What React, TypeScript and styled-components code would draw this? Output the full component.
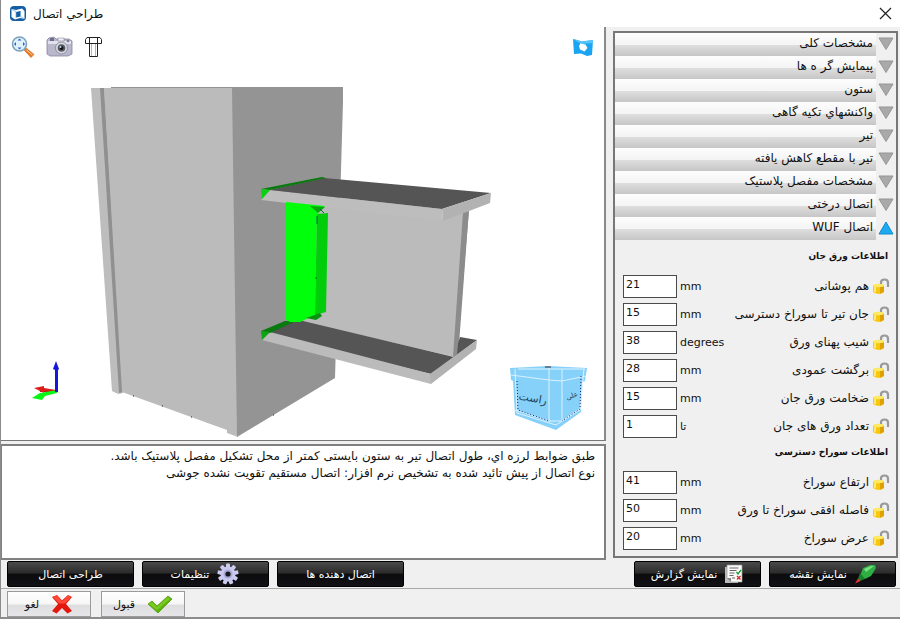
import React, { useState } from "react";
import styled, { createGlobalStyle, css } from "styled-components";

const GlobalStyle = createGlobalStyle`
  * { box-sizing: border-box; }
  body { margin: 0; background: #f0f0f0; }
  body, button, input { font-family: "DejaVu Sans", sans-serif; font-size: 11px; color: #111; }
  button { cursor: pointer; }
  svg { display: block; flex: none; }
`;

const Dialog = styled.main`
  display: flex;
  flex-direction: column;
  min-height: 100vh;
  background: #f0f0f0;
  border-left: 1px solid #8c8c8c;
  border-bottom: 2px solid #8c8c8c;
`;

const TitleBar = styled.header`
  display: flex;
  align-items: center;
  gap: 6px;
  height: 27px;
  padding: 0 8px;
  background: #fff;
`;

const Title = styled.h1`
  flex: 1;
  margin: 0;
  font-size: 12px;
  font-weight: 400;
`;

const IconButton = styled.button`
  display: grid;
  place-items: center;
  padding: 0;
  border: 0;
  background: none;
`;

const Workspace = styled.div`
  flex: 1;
  display: grid;
  grid-template-columns: minmax(0, 1fr) 285px;
  gap: 7px;
  padding-right: 2px;
`;

const Left = styled.div`
  display: flex;
  flex-direction: column;
  gap: 3px;
`;

const Viewport = styled.section`
  flex: 1;
  display: flex;
  flex-direction: column;
  background: #fff;
  border-right: 2px solid #8a8a8a;
  border-bottom: 1px solid #777;
`;

const ViewTools = styled.div`
  display: flex;
  align-items: center;
  gap: 11px;
  height: 40px;
  padding: 0 10px;
`;

const PushRight = styled.div`
  margin-left: auto;
`;

const Scene = styled.svg`
  width: 100%;
  flex: 1 1 0;
  min-height: 300px;
`;

const Messages = styled.section`
  height: 116px;
  padding: 2px 9px;
  background: #fff;
  border: 2px solid #808080;
  border-left-width: 1px;
  font-size: 12px;
  line-height: 17px;
  p { margin: 0; }
`;

const Panel = styled.aside`
  margin-top: 4px;
  margin-bottom: 2px;
  border: 2px solid #777;
  background: #f0f0f0;
`;

const SectionToggle = styled.button`
  display: grid;
  grid-template-columns: 20px 1fr;
  align-items: center;
  justify-items: center;
  width: 100%;
  height: 23px;
  padding: 0;
  border: 0;
  background: none;
  font-size: 12px;
`;

const SectionBar = styled.span`
  justify-self: stretch;
  height: 23px;
  padding: 0 3px;
  line-height: 20px;
  text-align: right;
  background: linear-gradient(#fdfdfd 0, #f4f4f4 50%, #dedede 53%, #c6c6c6 100%);
`;

const GroupTitle = styled.h2<{ $tall?: boolean }>`
  height: ${(p) => (p.$tall ? 32 : 28)}px;
  margin: 0;
  padding: 0 8px;
  line-height: ${(p) => (p.$tall ? 32 : 24)}px;
  font-size: 9px;
  font-weight: 700;
`;

const FieldRow = styled.div`
  display: flex;
  align-items: center;
  gap: 3px;
  height: 28px;
  padding: 0 6px 0 8px;
`;

const FieldLabel = styled.label`
  font-size: 12px;
`;

const NumberBox = styled.input`
  width: 54px;
  height: 23px;
  padding: 0 2px 4px;
  border: 1px solid #4a4a4a;
  border-radius: 0;
  background: #fff;
`;

const Unit = styled.span`
  flex: 1;
`;

const ActionBar = styled.div`
  display: flex;
  align-items: center;
  gap: 8px;
  height: 29px;
  padding: 0 4px 0 6px;
  border-bottom: 1px solid #a8a8a8;
`;

const Spacer = styled.div`
  flex: 1;
`;

const buttonBase = css`
  display: flex;
  align-items: center;
  justify-content: center;
  height: 26px;
  padding: 0;
`;

const DarkButton = styled.button`
  ${buttonBase}
  gap: 7px;
  width: 127px;
  color: #fff;
  border: 1px solid #000;
  border-radius: 2px;
  background: linear-gradient(#4a4a4a 0, #2c2c2c 45%, #0c0c0e 52%, #111116 100%);
`;

const Footer = styled.footer`
  display: flex;
  gap: 10px;
  padding: 2px 6px 0;
`;

const LightButton = styled.button`
  ${buttonBase}
  gap: 12px;
  width: 84px;
  border: 1px solid #9a9a9a;
  background: linear-gradient(#fff 0, #f6f6f6 50%, #dedee0 55%, #e6e6e8 100%);
`;

const AppLogo = () => (
  <svg width="18" height="18" viewBox="0 0 18 18">
    <rect x="1" y="1" width="16" height="15" rx="4" fill="#145ea3" />
    <path d="M2.500 4 7 5l6-1.500L15.500 6v8L11 13l-5 1.500L2.500 12z" fill="#fff" />
    <path d="M7 7l4.500-1v5.500L7 12.500z" fill="#145ea3" />
    <path d="M3 4.500l4 2v6M15 13.500l-3.500-2V6" fill="none" stroke="#6fa9d8" strokeWidth=".7" />
  </svg>
);

const CloseIcon = () => (
  <svg width="13" height="13" viewBox="0 0 13 13" stroke="#222" strokeWidth="1.200">
    <path d="M1 1l11 11M12 1L1 12" />
  </svg>
);

const ZoomIcon = () => (
  <svg width="24" height="24" viewBox="0 0 24 24">
    <path d="M13 15l2-2 8 6.500-3 3z" fill="#ee7a24" stroke="#c55a20" strokeWidth=".6" />
    <path d="M15.500 15l6 5" stroke="#ffd08a" />
    <circle cx="8.500" cy="9" r="7" fill="#dff1fb" stroke="#7da3bd" strokeWidth="1.600" />
    <path d="M8.500 3.500l2 2h-4zM8.500 14.500l2-2h-4zM3 9l2-2v4zM14 9l-2-2v4z" fill="#2a5fd0" />
  </svg>
);

const CameraIcon = () => (
  <svg width="27" height="22" viewBox="0 0 27 22">
    <path d="M3 2l5-1 2 2h13l3 2v13l-4 2H4l-3-2V4z" fill="#b9b7cc" stroke="#8583a0" strokeWidth=".8" />
    <path d="M2 5h23v3H2z" fill="#e2e1ee" />
    <path d="M4 2h4v3H4z" fill="#6f6d8e" />
    <rect x="12" y="2" width="6" height="3" fill="#eef" stroke="#777" strokeWidth=".5" />
    <circle cx="22" cy="5" r="1.300" fill="#7b7b95" />
    <circle cx="15.500" cy="12" r="6" fill="#d9d9e2" stroke="#8f8fa2" />
    <circle cx="15.500" cy="12" r="3.800" fill="#555866" />
    <circle cx="15.500" cy="12" r="1.900" fill="#111" />
    <circle cx="14.500" cy="11" r="1" fill="#cde" />
  </svg>
);

const BoltIcon = () => (
  <svg width="19" height="21" viewBox="0 0 19 21" fill="#fff" stroke="#222">
    <path d="M5.500 6.500h8v13h-8z" />
    <path d="M7.500 7v12M11.500 7v12" stroke="#b5b5b5" />
    <path d="M3 .5h13l1.500 2v4h-16v-4z" />
    <path d="M5.500 1v5M13.500 1v5" />
  </svg>
);

const PerspectiveIcon = () => (
  <svg width="22" height="19" viewBox="0 0 22 19">
    <path d="M1 1l4 1 5 1.500 11-1.500-1 15-5 1-6-2.500-7 .5z" fill="#1ba4f2" />
    <path d="M1 1l4 1 5 1.500L21 2v3L9 6z" fill="#55c4fb" />
    <path d="M8.500 5.500l5 1 2 3.500-3 3.500-4.500-2L7 8z" fill="#fff" />
  </svg>
);

const Arrow = ({ open }: { open: boolean }) => (
  <svg width="16" height="18" viewBox="0 0 16 18">
    {open ? (
      <path d="M8 2l7 12H1z" fill="#1cabf2" stroke="#138bcc" strokeLinejoin="round" />
    ) : (
      <path d="M1 2h14L8 13.500z" fill="#a9a9a9" stroke="#969696" strokeLinejoin="round" />
    )}
  </svg>
);

const LockIcon = () => (
  <svg width="18" height="17" viewBox="0 0 18 17">
    <path d="M9 7V4.500C9 .5 16 .5 16 4.500V9" fill="none" stroke="#999" strokeWidth="2.200" />
    <path d="M1 7.500q5-3 11 0V14q-5 4-11 0z" fill="#f8c811" />
    <path d="M8 6.500l4 1V14l-4 1.800z" fill="#dfa000" />
    <ellipse cx="6.500" cy="7.500" rx="5.500" ry="1.700" fill="#ffea65" />
    <path d="M3 9v5" stroke="#fff3a0" strokeWidth="1.500" />
  </svg>
);

const GearIcon = () => (
  <svg width="24" height="22" viewBox="-12 -11 24 22">
    {[0, 40, 80, 120, 160, 200, 240, 280, 320].map((a) => (
      <rect key={a} x="-2" y="-10.500" width="4" height="6" rx="1" fill="#cdcdf2" transform={`rotate(${a})`} />
    ))}
    <circle r="7.500" fill="#c9c9ef" />
    <circle r="4.500" fill="#a9a9d8" />
    <circle r="2.600" fill="#17171c" />
  </svg>
);

const PenIcon = () => (
  <svg width="22" height="20" viewBox="0 0 22 20">
    <path d="M9 4l7-3h5l1 3-5 8-6 3-5-3z" fill="#2fae43" />
    <path d="M10 5l7-3h3l-8 6z" fill="#7be085" />
    <path d="M6 9l5 6-5 2-2-2z" fill="#168127" />
    <path d="M4 14.500l2.500 2.500L1 19.500z" fill="#e33" />
  </svg>
);

const ReportIcon = () => (
  <svg width="20" height="20" viewBox="0 0 20 20">
    <path d="M1 3h13v16H1z" fill="#bbb" />
    <path d="M3 1h15v17H7l-4-4z" fill="#fafafa" stroke="#999" strokeWidth=".7" />
    <path d="M5.500 4h9M5.500 6.500h7M5.500 9h5M5.500 11.500h4M8 14h3" stroke="#666" />
    <path d="M12.500 8l1.500 2 3-4" fill="none" stroke="#1b9c2d" strokeWidth="1.300" />
    <path d="M13 12l3.500 3.500m0-3.500L13 15.500" stroke="#d22" strokeWidth="1.300" />
    <path d="M3 14h4v4z" fill="#888" />
  </svg>
);

const CrossIcon = () => (
  <svg width="22" height="20" viewBox="0 0 22 20">
    <path d="M1 3l5-2 5 5.500L17 1l4 2-6 7 6 7-4.500 2.500L11 14l-5.500 5.500L1 17l6-7z" fill="#e3170d" />
    <path d="M2 3l4-1.500 5 6 6-6 3 1.500-6 6.500H8z" fill="#ff4a38" />
  </svg>
);

const CheckIcon = () => (
  <svg width="26" height="19" viewBox="0 0 26 19">
    <path d="M1 9l4-3 5 5L21 1l4 3-14 14z" fill="#5fb20c" stroke="#4b9704" strokeWidth=".7" />
    <path d="M2 9l3-2 5 5L21 2l2 2-13 11z" fill="#79cb23" />
  </svg>
);

const CubeText = styled.text`
  font-family: "DejaVu Sans", sans-serif;
  fill: #1c4257;
`;

const ConnectionScene = () => (
  <Scene viewBox="1 67 603 373" role="img" aria-label="اتصال تیر به ستون">
    <g>
      <path d="M91 88h14l18 305-5 1-6-3z" fill="#bdbdbd" />
      <path d="M100 88h4l19 304-4 1z" fill="#909090" />
      <path d="M104 88h129l5 349-11-4v-3l-105-38z" fill="#bbb" />
      <path d="M232 88h111v13l-8 277-98 59z" fill="#949494" />
      <path d="M111 87.500h16M127 87.500h216" stroke="#777" strokeWidth=".8" />
      <path d="M133 396h1M162 406h1M191 417h1M273 415h1" stroke="#222" />
    </g>
    <g>
      <path d="M286 202l157 17 21-8-9 146-155-36z" fill="#bbb" />
      <path d="M464 211l5-2-11 149-4 1z" fill="#8c8c8c" />
      <path d="M261 333l24-12 18 0 151 36 6-20 17 3-46 34z" fill="#555" />
      <path d="M463 212l6-2-12 145-4 2z" fill="#8c8c8c" />
      <path d="M262 340l8-8 161 42v10z" fill="#bbb" />
      <path d="M430 374l47-34-1 9-45 35z" fill="#b2b2b2" />
      <path d="M261 200l9-10 172 19 1 12z" fill="#bdbdbd" />
      <path d="M270 190l54-12 167 15-49 16z" fill="#555" />
      <path d="M442 209l49-16-1 10-47 18z" fill="#b2b2b2" />
    </g>
    <g>
      <path d="M261 189l61-12 4 1-56 12z" fill="#087a10" />
      <path d="M261 189l9 1-8 9z" fill="#0bd014" />
      <path d="M261 331l24-10h11l-26 12z" fill="#087a10" />
      <path d="M261 331l9 1-8 8z" fill="#0ca514" />
      <path d="M286 202l39 4-8 8-2 101-15 7h-10l-5-3z" fill="#00ff0a" />
      <path d="M317 214l11-1-2 99-11 3z" fill="#02cd0a" />
      <path d="M310 206l15 1-7 6z" fill="#05a90d" />
      <path d="M306 318l14-5 2 3-6 4z" fill="#07930d" />
      <path d="M320 209l4 4M317 216v8M316 277v2" stroke="#064" />
    </g>
    <g>
      <path d="M57 392l-17-3v3z" fill="#b01818" />
      <path d="M34 388l10-2v2l12 2v2l-12-1v2z" fill="#dc1b1b" />
      <path d="M57 390v3l-12 3-3 4-10-2 8-5z" fill="#09f515" />
      <path d="M55 392v-22l-2-1 3-8 3 8-1 1v22z" fill="#1717dc" />
    </g>
    <g>
      <path d="M510 368l38-2 39 2-2 13-3 1-1 30-25 18-41-15-2-34-2-1z" fill="#86d1fa" />
      <path d="M511 375l38 5 13 1 24-5M515 369l2 44 39 12M549 368v54M562 369v51M518 369h67M584 369l-4 41-24 15M515 410l34 11h13l19-13" fill="none" stroke="#dbf2ff" />
      <path d="M517 381l1 29 31 11M581 376l-1 33-18 12" fill="none" stroke="#226" strokeDasharray="1 2" />
      <path d="M545 367h6" stroke="#333" />
      <CubeText x="533" y="402" fontSize="11" textAnchor="middle" transform="rotate(10 533 398)">راست</CubeText>
      <CubeText x="572" y="398" fontSize="7" textAnchor="middle" transform="rotate(-20 572 396)">علی</CubeText>
    </g>
  </Scene>
);

const sections = [
  "مشخصات کلی",
  "پیمایش گر ه ها",
  "ستون",
  "واکنشهاي تکیه گاهی",
  "تیر",
  "تیر با مقطع کاهش یافته",
  "مشخصات مفصل پلاستیک",
  "اتصال درختی",
  "اتصال WUF",
];

type FieldData = { id: string; label: string; value: string; unit: string };

const webPlate: FieldData[] = [
  { id: "overlap", label: "هم پوشانی", value: "21", unit: "mm" },
  { id: "webgap", label: "جان تیر تا سوراخ دسترسی", value: "15", unit: "mm" },
  { id: "slope", label: "شیب پهنای ورق", value: "38", unit: "degrees" },
  { id: "return", label: "برگشت عمودی", value: "28", unit: "mm" },
  { id: "thickness", label: "ضخامت ورق جان", value: "15", unit: "mm" },
  { id: "count", label: "تعداد ورق های جان", value: "1", unit: "تا" },
];

const accessHole: FieldData[] = [
  { id: "height", label: "ارتفاع سوراخ", value: "41", unit: "mm" },
  { id: "distance", label: "فاصله افقی سوراخ تا ورق", value: "50", unit: "mm" },
  { id: "width", label: "عرض سوراخ", value: "20", unit: "mm" },
];

const Field = ({ data }: { data: FieldData }) => {
  const [value, setValue] = useState(data.value);
  return (
    <FieldRow>
      <NumberBox id={data.id} value={value} onChange={(e) => setValue(e.target.value)} />
      <Unit>{data.unit}</Unit>
      <FieldLabel htmlFor={data.id} dir="rtl">{data.label}</FieldLabel>
      <IconButton aria-label="قفل">
        <LockIcon />
      </IconButton>
    </FieldRow>
  );
};

export default function App() {
  const [open, setOpen] = useState(8);
  return (
    <>
      <GlobalStyle />
      <Dialog lang="fa">
        <TitleBar>
          <AppLogo />
          <Title>طراحي اتصال</Title>
          <IconButton aria-label="بستن"><CloseIcon /></IconButton>
        </TitleBar>

        <Workspace>
          <Left>
            <Viewport>
              <ViewTools>
                <IconButton aria-label="بزرگنمایی"><ZoomIcon /></IconButton>
                <IconButton aria-label="عکس"><CameraIcon /></IconButton>
                <IconButton aria-label="پیچ"><BoltIcon /></IconButton>
                <PushRight>
                  <IconButton aria-label="نما"><PerspectiveIcon /></IconButton>
                </PushRight>
              </ViewTools>
              <ConnectionScene />
            </Viewport>
            <Messages dir="rtl">
              <p>طبق ضوابط لرزه اي، طول اتصال تیر به ستون بایستی کمتر از محل تشکیل مفصل پلاستیک باشد.</p>
              <p>نوع اتصال از پیش تائید شده به تشخیص نرم افزار: اتصال مستقیم تقویت نشده جوشی</p>
            </Messages>
          </Left>

          <Panel>
            {sections.map((name, i) => (
              <SectionToggle key={name} dir="rtl" aria-expanded={open === i} onClick={() => setOpen(i)}>
                <Arrow open={open === i} />
                <SectionBar>{name}</SectionBar>
              </SectionToggle>
            ))}
            <GroupTitle dir="rtl" $tall>اطلاعات ورق جان</GroupTitle>
            {webPlate.map((f) => <Field key={f.id} data={f} />)}
            <GroupTitle dir="rtl">اطلاعات سوراخ دسترسی</GroupTitle>
            {accessHole.map((f) => <Field key={f.id} data={f} />)}
          </Panel>
        </Workspace>

        <ActionBar>
          <DarkButton dir="rtl">طراحی اتصال</DarkButton>
          <DarkButton dir="rtl"><GearIcon />تنظیمات</DarkButton>
          <DarkButton dir="rtl">اتصال دهنده ها</DarkButton>
          <Spacer />
          <DarkButton dir="rtl"><ReportIcon />نمایش گزارش</DarkButton>
          <DarkButton dir="rtl"><PenIcon />نمایش نقشه</DarkButton>
        </ActionBar>

        <Footer>
          <LightButton dir="rtl"><CrossIcon />لغو</LightButton>
          <LightButton dir="rtl"><CheckIcon />قبول</LightButton>
        </Footer>
      </Dialog>
    </>
  );
}
